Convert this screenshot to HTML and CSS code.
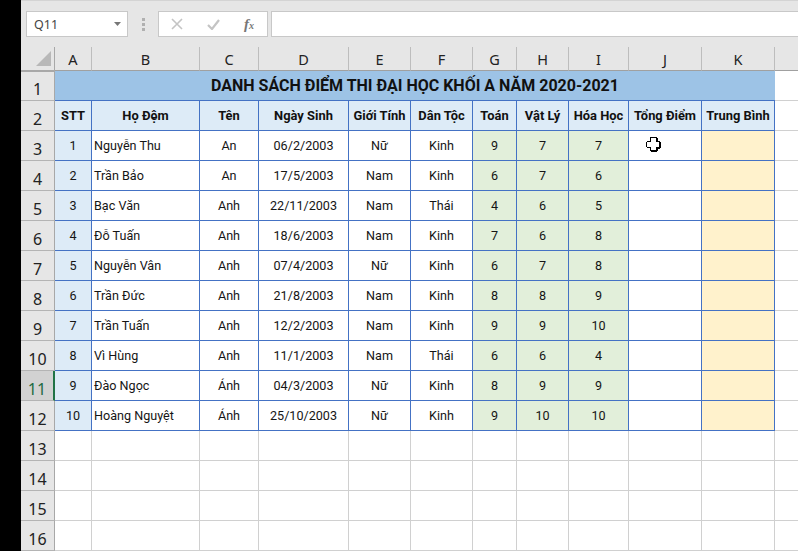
FILE: index.html
```html
<!DOCTYPE html>
<html lang="vi">
<head>
<meta charset="utf-8">
<title>Danh sách điểm thi</title>
<link rel="stylesheet" href="styles.css">
</head>
<body>
<div class="edge"></div>
<div class="app">
  <div class="formula-bar">
    <div class="name-box"><span>Q11</span><svg class="caret" width="7" height="4" viewBox="0 0 7 4"><path d="M0 0h7L3.5 4z"/></svg></div>
    <div class="grip"><i></i><i></i><i></i></div>
    <div class="fx-box">
      <svg width="12" height="12" viewBox="0 0 12 12"><path d="M1 1l10 10M11 1L1 11" stroke="#c4c4c4" stroke-width="1.6" fill="none"/></svg>
      <svg width="13" height="11" viewBox="0 0 13 11"><path d="M1 6l4 4 7-9" stroke="#c4c4c4" stroke-width="2.2" fill="none"/></svg>
      <span class="fx">f<small>x</small></span>
    </div>
    <div class="input-box"></div>
  </div>
  <div class="sheet">
    <div class="corner"><svg width="17" height="17" viewBox="0 0 17 17"><path d="M16 1v15H1z" fill="#b8b8b8"/></svg></div>
    <div class="ch">A</div><div class="ch">B</div><div class="ch">C</div><div class="ch">D</div><div class="ch">E</div><div class="ch">F</div><div class="ch">G</div><div class="ch">H</div><div class="ch">I</div><div class="ch">J</div><div class="ch">K</div><div class="ch ch-end"></div>

    <div class="rh">1</div><div class="title">DANH SÁCH ĐIỂM THI ĐẠI HỌC KHỐI A NĂM 2020-2021</div><div class="g"></div>

    <div class="rh">2</div>
    <div class="c h">STT</div><div class="c h">Họ Đệm</div><div class="c h">Tên</div><div class="c h">Ngày Sinh</div><div class="c h">Giới Tính</div><div class="c h">Dân Tộc</div><div class="c h">Toán</div><div class="c h">Vật Lý</div><div class="c h">Hóa Học</div><div class="c h">Tổng Điểm</div><div class="c h">Trung Bình</div><div class="g"></div>

    <div class="rh">3</div>
    <div class="c s">1</div><div class="c n">Nguyễn Thu</div><div class="c">An</div><div class="c">06/2/2003</div><div class="c">Nữ</div><div class="c">Kinh</div><div class="c p">9</div><div class="c p">7</div><div class="c p">7</div>
    <div class="c cursor-cell"><svg class="cursor" width="15" height="15" viewBox="0 0 15 15" shape-rendering="crispEdges"><path d="M4 0h7v1h1v3h2v1h1v6h-1v1h-2v2h-1v1H5v-1H4v-3H1v-1H0V5h1V4h3z" fill="#000"/><path d="M5 1h5v4h3v5h-3v3H5v-3H1V5h4z" fill="#fff"/></svg></div>
    <div class="c y"></div><div class="g"></div>

    <div class="rh">4</div>
    <div class="c s">2</div><div class="c n">Trần Bảo</div><div class="c">An</div><div class="c">17/5/2003</div><div class="c">Nam</div><div class="c">Kinh</div><div class="c p">6</div><div class="c p">7</div><div class="c p">6</div><div class="c"></div><div class="c y"></div><div class="g"></div>

    <div class="rh">5</div>
    <div class="c s">3</div><div class="c n">Bạc Văn</div><div class="c">Anh</div><div class="c">22/11/2003</div><div class="c">Nam</div><div class="c">Thái</div><div class="c p">4</div><div class="c p">6</div><div class="c p">5</div><div class="c"></div><div class="c y"></div><div class="g"></div>

    <div class="rh">6</div>
    <div class="c s">4</div><div class="c n">Đỗ Tuấn</div><div class="c">Anh</div><div class="c">18/6/2003</div><div class="c">Nam</div><div class="c">Kinh</div><div class="c p">7</div><div class="c p">6</div><div class="c p">8</div><div class="c"></div><div class="c y"></div><div class="g"></div>

    <div class="rh">7</div>
    <div class="c s">5</div><div class="c n">Nguyễn Vân</div><div class="c">Anh</div><div class="c">07/4/2003</div><div class="c">Nữ</div><div class="c">Kinh</div><div class="c p">6</div><div class="c p">7</div><div class="c p">8</div><div class="c"></div><div class="c y"></div><div class="g"></div>

    <div class="rh">8</div>
    <div class="c s">6</div><div class="c n">Trần Đức</div><div class="c">Anh</div><div class="c">21/8/2003</div><div class="c">Nam</div><div class="c">Kinh</div><div class="c p">8</div><div class="c p">8</div><div class="c p">9</div><div class="c"></div><div class="c y"></div><div class="g"></div>

    <div class="rh">9</div>
    <div class="c s">7</div><div class="c n">Trần Tuấn</div><div class="c">Anh</div><div class="c">12/2/2003</div><div class="c">Nam</div><div class="c">Kinh</div><div class="c p">9</div><div class="c p">9</div><div class="c p">10</div><div class="c"></div><div class="c y"></div><div class="g"></div>

    <div class="rh">10</div>
    <div class="c s">8</div><div class="c n">Vì Hùng</div><div class="c">Anh</div><div class="c">11/1/2003</div><div class="c">Nam</div><div class="c">Thái</div><div class="c p">6</div><div class="c p">6</div><div class="c p">4</div><div class="c"></div><div class="c y"></div><div class="g"></div>

    <div class="rh rh-active">11</div>
    <div class="c s">9</div><div class="c n">Đào Ngọc</div><div class="c">Ánh</div><div class="c">04/3/2003</div><div class="c">Nữ</div><div class="c">Kinh</div><div class="c p">8</div><div class="c p">9</div><div class="c p">9</div><div class="c"></div><div class="c y"></div><div class="g"></div>

    <div class="rh">12</div>
    <div class="c s">10</div><div class="c n">Hoàng Nguyệt</div><div class="c">Ánh</div><div class="c">25/10/2003</div><div class="c">Nữ</div><div class="c">Kinh</div><div class="c p">9</div><div class="c p">10</div><div class="c p">10</div><div class="c"></div><div class="c y"></div><div class="g"></div>

    <div class="rh">13</div><div class="g"></div><div class="g"></div><div class="g"></div><div class="g"></div><div class="g"></div><div class="g"></div><div class="g"></div><div class="g"></div><div class="g"></div><div class="g"></div><div class="g"></div><div class="g"></div>
    <div class="rh">14</div><div class="g"></div><div class="g"></div><div class="g"></div><div class="g"></div><div class="g"></div><div class="g"></div><div class="g"></div><div class="g"></div><div class="g"></div><div class="g"></div><div class="g"></div><div class="g"></div>
    <div class="rh">15</div><div class="g"></div><div class="g"></div><div class="g"></div><div class="g"></div><div class="g"></div><div class="g"></div><div class="g"></div><div class="g"></div><div class="g"></div><div class="g"></div><div class="g"></div><div class="g"></div>
    <div class="rh">16</div><div class="g"></div><div class="g"></div><div class="g"></div><div class="g"></div><div class="g"></div><div class="g"></div><div class="g"></div><div class="g"></div><div class="g"></div><div class="g"></div><div class="g"></div><div class="g"></div>
  </div>
</div>
</body>
</html>
```
FILE: styles.css
```css
* { box-sizing: border-box; }
html, body { margin: 0; height: 100%; overflow: hidden; }
body { display: flex; width: 798px; height: 551px; background: #000; font-family: Roboto, "Liberation Sans", sans-serif; color: #151515; }
.edge { width: 21px; flex: none; background: #000; }
.app { flex: 1; min-width: 0; background: #e6e6e6; display: flex; flex-direction: column; }

.formula-bar { height: 47px; flex: none; display: flex; align-items: flex-start; padding-top: 11px; padding-left: 5px; border-top: 1px solid #d4d4d4; }
.name-box { width: 102px; height: 26px; margin-top: -1px; background: #fff; border: 1px solid #c8c8c8; display: flex; align-items: center; justify-content: space-between; padding: 0 6px 0 7px; font-family: "Noto Sans", sans-serif; font-size: 12.5px; color: #444; }
.caret { fill: #777; }
.grip { width: 30px; height: 26px; margin-top: -1px; display: flex; flex-direction: column; align-items: center; justify-content: center; gap: 2px; }
.grip i { width: 3px; height: 3px; background: #b0b0b0; display: block; }
.fx-box { width: 110px; height: 26px; margin-top: -1px; background: #fff; border: 1px solid #c8c8c8; display: flex; align-items: center; justify-content: space-between; padding: 0 13px 0 12px; }
.fx { font-family: "Liberation Serif", serif; font-style: italic; font-size: 15px; color: #777; font-weight: bold; }
.fx small { font-size: 10px; }
.input-box { flex: 1; height: 26px; margin-top: -1px; margin-left: 3px; background: #fff; border: 1px solid #c8c8c8; border-right: 0; }

.sheet { flex: 1; display: grid; grid-template-columns: 34px 37px 108px 59px 90px 62px 62px 44px 52px 60px 73px 73px 24px; grid-template-rows: 24px repeat(16, 30px); background: #fff; }
.corner { background: #e6e6e6; border-right: 1px solid #a8a8a8; border-bottom: 2px solid #a8a8a8; display: flex; justify-content: flex-end; align-items: flex-start; padding: 3px 2px 0 0; margin-bottom: -1px; height: 25px; position: relative; z-index: 1; }
.ch { background: #e6e6e6; border-right: 1px solid #bdbdbd; border-bottom: 1px solid #a0a0a0; font-family: "Noto Sans", sans-serif; font-size: 14.5px; display: flex; align-items: center; justify-content: center; color: #222; padding-top: 1px; }
.ch-end { border-right: 0; }
.rh { background: #e6e6e6; border-right: 1px solid #a8a8a8; border-bottom: 1px solid #b4b4b4; font-family: "Noto Sans", sans-serif; font-size: 16px; display: flex; align-items: flex-end; justify-content: center; color: #222; padding-bottom: 1px; line-height: 20px; }
.rh-active { background: #d2d2d2; color: #1e6b41; border-right: 2px solid #217346; }
.title { grid-column: 2 / span 11; background: #9dc3e6; border-bottom: 1px solid #4472c4; font-weight: 700; font-size: 16px; color: #111; display: flex; align-items: center; justify-content: center; padding-bottom: 1px; }
.c { border-right: 1px solid #4472c4; border-bottom: 1px solid #4472c4; font-size: 12.6px; display: flex; align-items: center; justify-content: center; white-space: nowrap; background: #fff; }
.h { background: #ddebf7; font-weight: 700; font-size: 12.9px; color: #111; }
.s { background: #ddebf7; }
.n { justify-content: flex-start; padding-left: 2px; }
.p { background: #e2efda; }
.y { background: #fff2cc; }
.g { border-right: 1px solid #d0d0d0; border-bottom: 1px solid #d0d0d0; background: #fff; }
.cursor-cell { position: relative; }
.cursor { position: absolute; left: 17px; top: 6px; }
```
